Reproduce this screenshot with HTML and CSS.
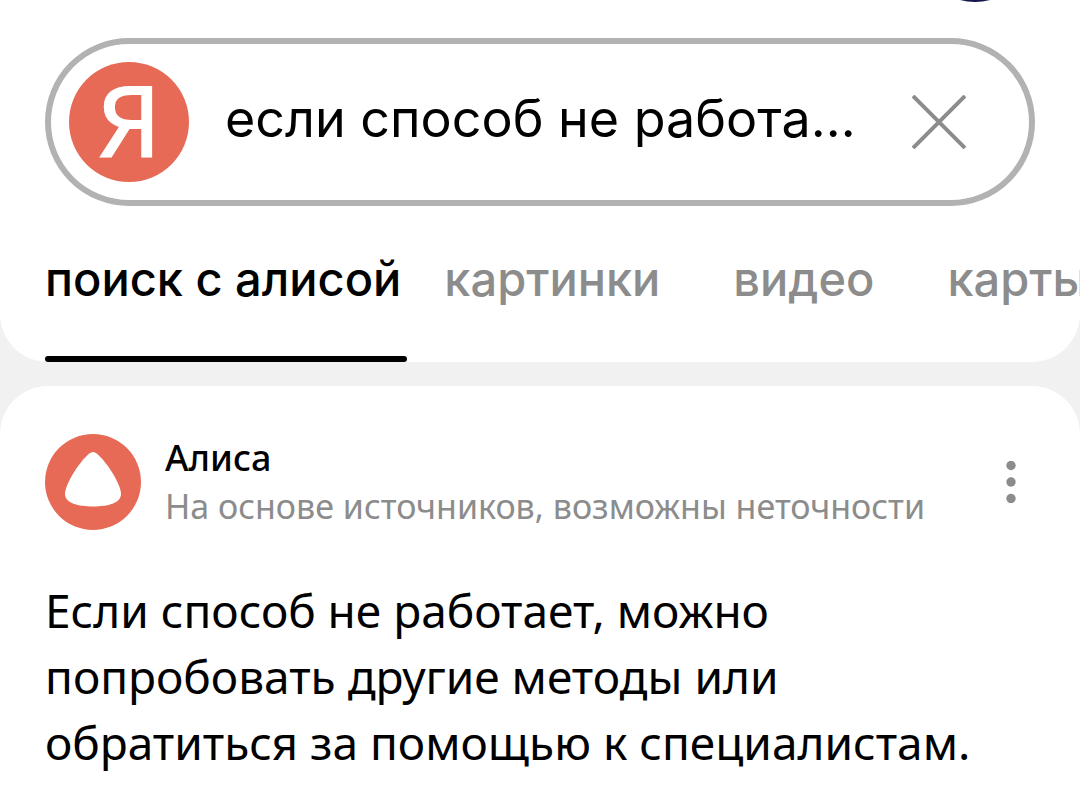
FILE: index.html
```html
<!DOCTYPE html>
<html lang="ru">
<head>
    <meta charset="UTF-8">
    <meta name="viewport" content="width=device-width, initial-scale=1.0">
    <title>Поиск с Алисой</title>
    <link rel="stylesheet" href="styles.css">
</head>
<body>
    <header class="header">
        <span class="avatar"></span>
        <form class="search" role="search">
            <a class="logo" href="#" aria-label="Яндекс">Я</a>
            <input class="search-input" type="text" aria-label="Запрос" value="если способ не работа…">
            <button class="clear" type="reset" aria-label="Очистить">
                <svg width="54" height="54" viewBox="0 0 54 54" fill="none" stroke="#8c8c8c" stroke-width="4">
                    <path d="M1 1 53 53M53 1 1 53"/>
                </svg>
            </button>
        </form>
        <nav class="tabs">
            <a class="tab active" href="#">поиск с алисой</a>
            <a class="tab" href="#">картинки</a>
            <a class="tab" href="#">видео</a>
            <a class="tab" href="#">карты</a>
        </nav>
    </header>
    <main class="card">
        <div class="source">
            <svg class="alice" viewBox="0 0 96 96">
                <circle cx="48" cy="48" r="48" fill="#e66a55"/>
                <path d="M48 18C55 18 76 48 76 60C76 69 63 72.500 48 72.500S20 69 20 60C20 48 41 18 48 18Z" fill="#fff"/>
            </svg>
            <div class="source-text">
                <h2 class="name">Алиса</h2>
                <p class="note">На основе источников, возможны неточности</p>
            </div>
            <button class="menu" type="button" aria-label="Ещё">
                <svg width="10" height="42" viewBox="0 0 10 42" fill="#8c8c8c">
                    <circle cx="5" cy="4.500" r="4.700"/>
                    <circle cx="5" cy="21" r="4.700"/>
                    <circle cx="5" cy="37.500" r="4.700"/>
                </svg>
            </button>
        </div>
        <p class="answer">Если способ не работает, можно попробовать другие методы или обратиться за помощью к специалистам.</p>
    </main>
</body>
</html>
```
FILE: styles.css
```css
* {
    box-sizing: border-box;
}
body {
    margin: 0;
    min-height: 100vh;
    display: flex;
    flex-direction: column;
    gap: 24px;
    background-color: #f1f1f1;
    color: #000;
    font-family: "Noto Sans", "Open Sans", sans-serif;
    overflow-x: hidden;
}
.header {
    position: relative;
    padding: 38px 45px 0;
    background-color: #fff;
    border-radius: 0 0 48px 48px;
    overflow: hidden;
}
/* Account picture, scrolled almost out of view */
.avatar {
    position: absolute;
    top: -112px;
    right: 48px;
    width: 114px;
    height: 114px;
    border-radius: 50%;
    background-color: #17174f;
}
.search {
    display: flex;
    align-items: center;
    height: 168px;
    padding: 0 63px 0 18px;
    border: 6px solid #b2b2b2;
    border-radius: 84px;
}
.logo {
    display: flex;
    flex: none;
    align-items: center;
    justify-content: center;
    width: 120px;
    height: 120px;
    padding-bottom: 8px;
    border-radius: 50%;
    background-color: #e66a55;
    color: #fff;
    font-size: 100px;
    font-weight: 500;
    line-height: 1;
    text-decoration: none;
}
.search-input {
    flex: 1;
    min-width: 0;
    padding: 0 0 8px;
    margin-left: 36px;
    border: none;
    outline: none;
    background: none;
    color: #000;
    font-family: Inter, sans-serif;
    font-size: 52px;
    text-overflow: ellipsis;
}
.clear, .menu {
    display: flex;
    flex: none;
    padding: 0;
    border: none;
    background: none;
    cursor: pointer;
}
.tabs {
    display: flex;
    gap: 37px;
    margin-top: 36px;
    margin-right: -45px;
    overflow: hidden;
}
.tab {
    flex: none;
    padding-right: 36px;
    height: 120px;
    border-bottom: 6px solid transparent;
    color: #8c8c8c;
    font-family: Inter, sans-serif;
    font-size: 47px;
    font-weight: 500;
    line-height: 74px;
    text-decoration: none;
}
.active {
    position: relative;
    padding-right: 6px;
    color: #000;
}
.active::after {
    content: "";
    position: absolute;
    left: 0;
    right: 0;
    bottom: -6px;
    height: 6px;
    border-radius: 3px;
    background-color: #000;
}
.card {
    flex: 1;
    padding: 48px 45px 24px;
    background-color: #fff;
    border-radius: 48px 48px 0 0;
}
.source {
    display: flex;
    align-items: center;
    gap: 24px;
}
.alice {
    flex: none;
    width: 96px;
    height: 96px;
}
.source-text {
    flex: 1;
}
.name, .note {
    margin: 0;
    line-height: 48px;
}
.name {
    font-size: 36px;
    font-weight: 500;
}
.note {
    color: #8c8c8c;
    font-size: 34px;
}
.menu {
    margin-right: 19px;
}
.answer {
    margin: 47px 0 0;
    font-size: 46px;
    line-height: 66px;
}
```
